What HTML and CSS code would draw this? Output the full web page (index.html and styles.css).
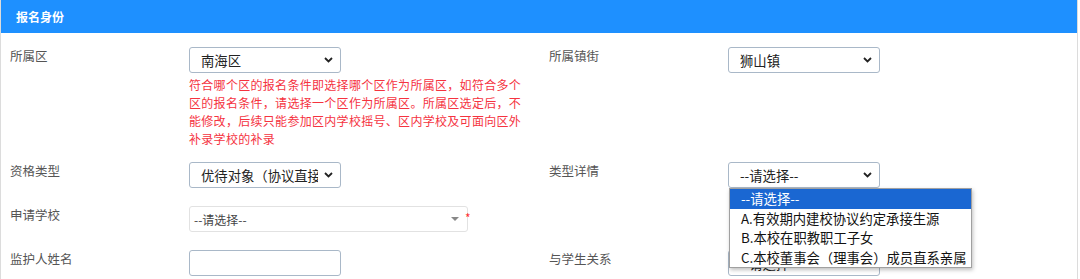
FILE: index.html
```html
<!DOCTYPE html>
<html lang="zh-CN">
<head>
<meta charset="utf-8">
<title>报名身份</title>
<link rel="stylesheet" href="styles.css">
</head>
<body>
<div class="panel">
  <div class="panel-head">报名身份</div>
  <div class="form">
    <div class="label">所属区</div>
    <div class="field">
      <div class="sel"><span class="sel-text">南海区</span><svg class="chev" width="9" height="6" viewBox="0 0 9 6"><path d="M1 1 L4.5 4.5 L8 1" fill="none" stroke="#222" stroke-width="1.8"/></svg></div>
      <div class="hint">符合哪个区的报名条件即选择哪个区作为所属区，如符合多个区的报名条件，请选择一个区作为所属区。所属区选定后，不能修改，后续只能参加区内学校摇号、区内学校及可面向区外补录学校的补录</div>
    </div>
    <div class="label">所属镇街</div>
    <div class="field">
      <div class="sel"><span class="sel-text">狮山镇</span><svg class="chev" width="9" height="6" viewBox="0 0 9 6"><path d="M1 1 L4.5 4.5 L8 1" fill="none" stroke="#222" stroke-width="1.8"/></svg></div>
    </div>

    <div class="label">资格类型</div>
    <div class="field">
      <div class="sel"><span class="sel-text">优待对象（协议直接生源）</span><svg class="chev" width="9" height="6" viewBox="0 0 9 6"><path d="M1 1 L4.5 4.5 L8 1" fill="none" stroke="#222" stroke-width="1.8"/></svg></div>
    </div>
    <div class="label">类型详情</div>
    <div class="field">
      <div class="sel open"><span class="sel-text">--请选择--</span><svg class="chev" width="9" height="6" viewBox="0 0 9 6"><path d="M1 1 L4.5 4.5 L8 1" fill="none" stroke="#222" stroke-width="1.8"/></svg>
        <ul class="dropdown">
          <li class="active">--请选择--</li>
          <li>A.有效期内建校协议约定承接生源</li>
          <li>B.本校在职教职工子女</li>
          <li>C.本校董事会（理事会）成员直系亲属</li>
        </ul>
      </div>
    </div>

    <div class="label">申请学校</div>
    <div class="field wide">
      <div class="sel2"><span class="sel2-text">--请选择--</span><span class="tri"></span></div>
      <span class="req">*</span>
    </div>
    <div class="label"></div>
    <div class="field"></div>

    <div class="label">监护人姓名</div>
    <div class="field">
      <div class="input"></div>
    </div>
    <div class="label">与学生关系</div>
    <div class="field">
      <div class="sel"><span class="sel-text">--请选择--</span><svg class="chev" width="9" height="6" viewBox="0 0 9 6"><path d="M1 1 L4.5 4.5 L8 1" fill="none" stroke="#222" stroke-width="1.8"/></svg></div>
    </div>
  </div>
</div>
</body>
</html>
```

FILE: styles.css
```css
html, body {
  margin: 0;
  padding: 0;
  background: #fff;
  font-family: "Microsoft YaHei", "Noto Sans CJK SC", sans-serif;
  overflow: hidden;
}
.panel {
  width: 1078px;
  height: 279px;
  border-left: 1px solid #dcdcdc;
  border-right: 1px solid #dcdcdc;
  box-sizing: border-box;
}
.panel-head {
  height: 33px;
  background: #1e90ff;
  color: #fff;
  font-size: 12px;
  font-weight: bold;
  line-height: 33px;
  padding-left: 15px;
}
.form {
  display: grid;
  grid-template-columns: 179px 360px 179px 1fr;
  row-gap: 18px;
  padding: 14px 0 0 9px;
}
.label {
  font-size: 12.5px;
  line-height: 18px;
  color: #555;
}
.field {
  position: relative;
  display: flex;
  flex-direction: column;
  align-items: flex-start;
}
.field.wide {
  flex-direction: row;
}
.sel {
  position: relative;
  width: 152px;
  height: 26px;
  box-sizing: border-box;
  border: 1px solid #a9b8c8;
  border-radius: 3px;
  background: #fff;
  display: flex;
  align-items: center;
  padding: 0 7px 0 11px;
  font-size: 13.333px;
  color: #222;
}
.sel-text {
  flex: 1;
  overflow: hidden;
  white-space: nowrap;
  margin-right: 6px;
}
.chev {
  flex: none;
}
.hint {
  width: 336px;
  margin-top: 3px;
  margin-bottom: -4px;
  font-size: 12px;
  letter-spacing: 0.3px;
  line-height: 18px;
  color: #f5333f;
}
.dropdown {
  position: absolute;
  top: 25px;
  left: 0;
  width: 243px;
  margin: 0;
  padding: 0;
  list-style: none;
  background: #fff;
  border: 1px solid #a0a0a0;
  box-shadow: 1px 2px 4px rgba(0, 0, 0, 0.25);
  box-sizing: border-box;
  z-index: 10;
}
.dropdown li {
  height: 19.5px;
  line-height: 19.5px;
  padding-left: 11px;
  font-size: 13.333px;
  color: #111;
  white-space: nowrap;
}
.dropdown li.active {
  background: #1a67d2;
  color: #fff;
}
.sel2 {
  width: 279px;
  height: 26px;
  box-sizing: border-box;
  border: 1px solid #e2e2e2;
  border-radius: 3px;
  background: #fff;
  display: flex;
  align-items: center;
  padding: 0 8px 0 4px;
  font-size: 12px;
  color: #444;
}
.sel2-text {
  flex: 1;
}
.tri {
  width: 0;
  height: 0;
  border-left: 4px solid transparent;
  border-right: 4px solid transparent;
  border-top: 4px solid #888;
}
.req {
  color: #f33;
  font-size: 12px;
  line-height: 12px;
  margin-left: -3px;
  margin-top: 6px;
}
.input {
  width: 152px;
  height: 26px;
  box-sizing: border-box;
  border: 1px solid #a9b8c8;
  border-radius: 3px;
  background: #fff;
}
```
